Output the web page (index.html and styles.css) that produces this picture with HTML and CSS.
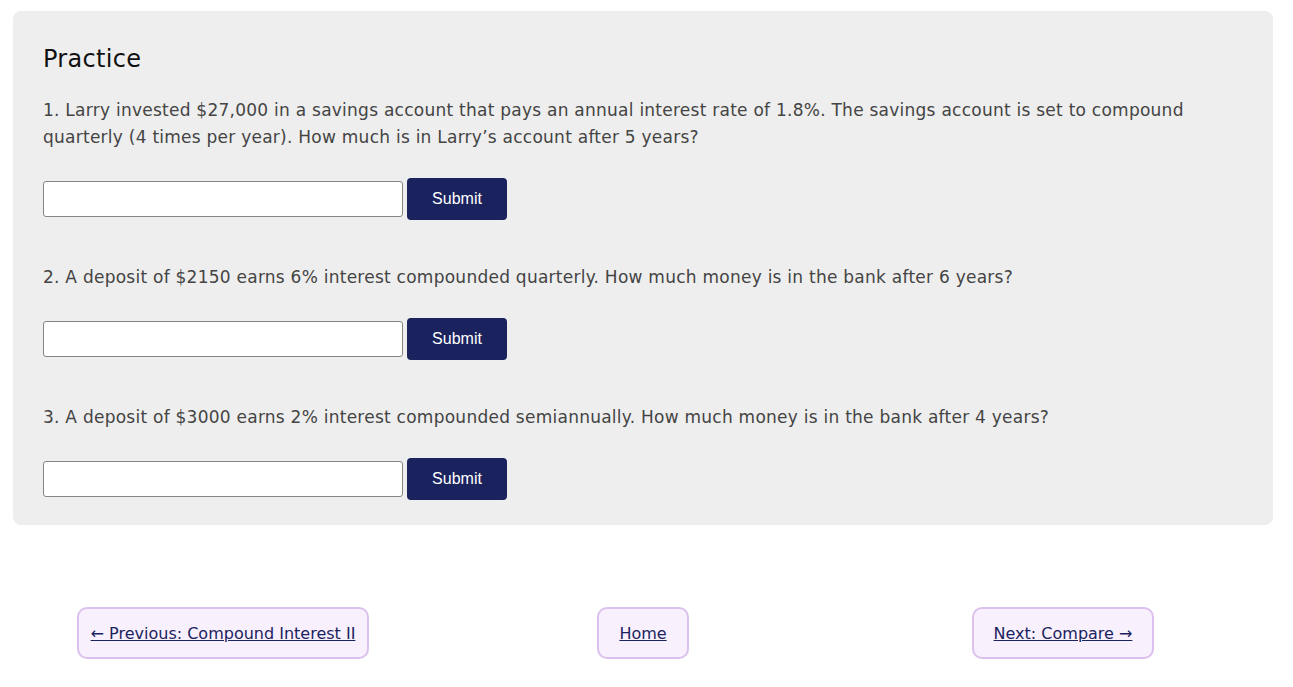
FILE: index.html
```html
<!DOCTYPE html>
<html lang="en">
<head>
<meta charset="utf-8">
<title>Practice</title>
<link rel="stylesheet" href="styles.css">
</head>
<body>
<div class="page">
  <section class="card">
    <h2 class="card-title">Practice</h2>

    <p class="question">1. Larry invested $27,000 in a savings account that pays an annual interest rate of 1.8%. The savings account is set to compound quarterly (4 times per year). How much is in Larry’s account after 5 years?</p>
    <form class="answer-row">
      <input class="answer-input" type="text">
      <button class="submit-btn" type="button">Submit</button>
    </form>

    <p class="question">2. A deposit of $2150 earns 6% interest compounded quarterly. How much money is in the bank after 6 years?</p>
    <form class="answer-row">
      <input class="answer-input" type="text">
      <button class="submit-btn" type="button">Submit</button>
    </form>

    <p class="question">3. A deposit of $3000 earns 2% interest compounded semiannually. How much money is in the bank after 4 years?</p>
    <form class="answer-row">
      <input class="answer-input" type="text">
      <button class="submit-btn" type="button">Submit</button>
    </form>
  </section>

  <nav class="nav">
    <div class="nav-cell"><a class="nav-link nav-link--prev" href="#">← Previous: Compound Interest II</a></div>
    <div class="nav-cell"><a class="nav-link" href="#">Home</a></div>
    <div class="nav-cell"><a class="nav-link" href="#">Next: Compare →</a></div>
  </nav>
</div>
</body>
</html>
```
FILE: styles.css
```css
* {
  box-sizing: border-box;
}

body {
  margin: 0;
  background: #ffffff;
  font-family: "DejaVu Sans", Inter, sans-serif;
}

.page {
  padding: 11px 20px 0 13px;
}

.card {
  background: #eeeeee;
  border-radius: 8px;
  padding: 30px 30px 25px;
}

.card-title {
  margin: 0 0 18px;
  font-size: 24px;
  line-height: 36px;
  font-weight: normal;
  letter-spacing: 0.3px;
  color: #111111;
}

.question {
  margin: 0 0 27px;
  padding-top: 2px;
  font-size: 17px;
  line-height: 27px;
  letter-spacing: 0.25px;
  color: #444444;
}

.answer-row {
  display: flex;
  align-items: center;
  gap: 4px;
  height: 42px;
  margin: 0 0 42px;
}

.answer-row:last-child {
  margin-bottom: 0;
}

.answer-input {
  width: 360px;
  height: 36px;
  margin: 0;
  border: 1px solid #858585;
  border-radius: 3px;
  background: #ffffff;
}

.submit-btn {
  width: 100px;
  height: 42px;
  border: none;
  border-radius: 4px;
  background: #1b235e;
  color: #ffffff;
  font-family: "Liberation Sans", Arial, sans-serif;
  font-size: 16px;
}

.nav {
  display: flex;
  margin-top: 82px;
}

.nav-cell {
  flex: 1;
  display: flex;
  justify-content: center;
}

.nav-link {
  display: inline-block;
  padding: 13px 20px 11px;
  line-height: 24px;
  font-size: 16px;
  color: #1b235e;
  background: #f8f0fd;
  border: 2px solid #dcc1ee;
  border-radius: 10px;
}

.nav-link--prev {
  padding-left: 12px;
  padding-right: 12px;
}
```
